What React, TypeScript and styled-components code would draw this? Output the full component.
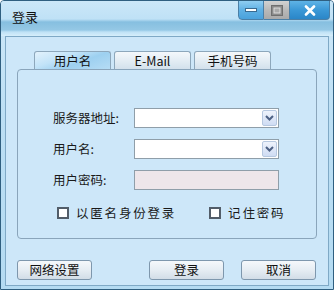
import React from "react";
import styled, { createGlobalStyle } from "styled-components";

const GlobalStyle = createGlobalStyle`
  html, body {
    margin: 0;
    padding: 0;
    background: #ffffff;
  }
  body {
    font-family: "Noto Sans CJK SC", "Microsoft YaHei", sans-serif;
    font-size: 12px;
    color: #1a1a1a;
  }
`;

const Window = styled.div`
  width: 334px;
  height: 290px;
  box-sizing: border-box;
  border: 1px solid #2f5f80;
  border-radius: 4px 4px 0 0;
  background: linear-gradient(#cfe9f9, #bcdff4 40%, #b4dbf2);
  display: flex;
  flex-direction: column;
  overflow: hidden;
`;

const TitleBar = styled.div`
  height: 35px;
  flex: none;
  display: flex;
  align-items: flex-start;
  background: linear-gradient(
    #cbe7f8 0px,
    #bfe1f6 18px,
    #86bfe0 21px,
    #95c8e5 29px,
    #c0e2f6 31px,
    #d6eefb 35px
  );
`;

const Title = styled.div`
  flex: 1;
  padding: 8px 0 0 11px;
  font-size: 13px;
  line-height: 16px;
  color: #111;
`;

const Caption = styled.div`
  display: flex;
  margin-right: 3px;
  margin-top: -1px;
`;

const CapButton = styled.div<{ $kind: "min" | "max" | "close" }>`
  width: ${(p) => (p.$kind === "close" ? 40 : 26)}px;
  height: 20px;
  box-sizing: border-box;
  border: 1px solid #4b7fa6;
  border-left: ${(p) => (p.$kind === "min" ? "1px solid #4b7fa6" : "none")};
  border-radius: ${(p) =>
    p.$kind === "min" ? "0 0 0 4px" : p.$kind === "close" ? "0 0 4px 0" : "0"};
  display: flex;
  align-items: center;
  justify-content: center;
  background: ${(p) =>
    p.$kind === "max"
      ? "linear-gradient(#d2d2d2, #b9b9b9 50%, #a9a9a9)"
      : p.$kind === "close"
      ? "linear-gradient(#5fb3e6, #3b98d6 50%, #2a86c8)"
      : "linear-gradient(#8fcdf2, #5fb0e4 50%, #4aa2dc)"};
`;

const Client = styled.div`
  flex: 1;
  margin: 0 4px 4px 4px;
  border: 1px solid #7fa9c6;
  background: #cde7f9;
  padding: 14px 12px 5px 11px;
  display: flex;
  flex-direction: column;
`;

const Tabs = styled.div`
  display: flex;
  gap: 3px;
  margin-left: 17px;
  height: 18px;
  align-items: flex-end;
`;

const Tab = styled.div<{ $active?: boolean }>`
  width: 77px;
  height: 18px;
  box-sizing: border-box;
  border: 1px solid #8da7bb;
  border-bottom: none;
  border-radius: 3px 3px 0 0;
  text-align: center;
  line-height: 17px;
  font-size: 12.5px;
  color: #111;
  background: ${(p) =>
    p.$active
      ? "linear-gradient(160deg, #e3f2fc 0%, #c2e3f8 35%, #9dd0f0 60%, #b5dcf5 100%)"
      : "linear-gradient(#f4f8fb, #e4edf4 50%, #d3e1ec)"};
`;

const Panel = styled.div`
  width: 300px;
  height: 170px;
  box-sizing: border-box;
  border: 1px solid #8aa5bb;
  border-radius: 4px;
  padding: 38px 0 0 35px;
  display: flex;
  flex-direction: column;
`;

const FieldRow = styled.div`
  display: flex;
  align-items: center;
  height: 19px;
  margin-bottom: 12px;
`;

const Label = styled.div`
  width: 81px;
  font-size: 12.5px;
  color: #1a1a1a;
`;

const Combo = styled.div<{ $disabled?: boolean }>`
  width: 145px;
  height: 20px;
  box-sizing: border-box;
  border: 1px solid #8f9ea9;
  background: ${(p) => (p.$disabled ? "#eee6ea" : "#ffffff")};
  display: flex;
  justify-content: flex-end;
  align-items: center;
  padding-right: 1px;
`;

const DropButton = styled.div`
  width: 15px;
  height: 16px;
  box-sizing: border-box;
  border: 1px solid #b6c8e0;
  border-radius: 2px;
  background: linear-gradient(#eef3fc, #cfdcf3);
  display: flex;
  align-items: center;
  justify-content: center;
`;

const Checks = styled.div`
  display: flex;
  align-items: center;
  margin: 2px 0 0 4px;
  gap: 33px;
`;

const Check = styled.label`
  display: flex;
  align-items: center;
  gap: 7px;
  letter-spacing: 1.8px;
  font-size: 12.5px;
  color: #1a1a1a;
`;

const Box = styled.span`
  width: 12px;
  height: 12px;
  box-sizing: border-box;
  border: 2px solid #525d69;
  background: #ffffff;
`;

const Footer = styled.div`
  display: flex;
  margin-top: 21px;
  gap: 17px;
`;

const Button = styled.div<{ $push?: boolean }>`
  width: 75px;
  height: 20px;
  box-sizing: border-box;
  border: 1px solid #7e97ad;
  border-radius: 3px;
  background: linear-gradient(#f5f8fb, #e6edf3 50%, #d2dde7);
  text-align: center;
  line-height: 18px;
  font-size: 12.5px;
  color: #111;
  margin-left: ${(p) => (p.$push ? "auto" : "0")};
`;

const Chevron = () => (
  <svg width="9" height="6" viewBox="0 0 9 6">
    <path d="M1 1 L4.5 4.5 L8 1" fill="none" stroke="#4d6185" strokeWidth="2" />
  </svg>
);

export default function App() {
  return (
    <>
      <GlobalStyle />
      <Window>
        <TitleBar>
          <Title>登录</Title>
          <Caption>
            <CapButton $kind="min">
              <svg width="12" height="4" viewBox="0 0 12 4">
                <rect x="0.5" y="0.5" width="11" height="3" fill="#fff" stroke="#3a6a90" strokeWidth="1" />
              </svg>
            </CapButton>
            <CapButton $kind="max">
              <svg width="12" height="11" viewBox="0 0 12 11">
                <rect x="0.5" y="0.5" width="11" height="10" fill="#8a8a8a" stroke="#6f6f6f" />
                <rect x="3" y="3" width="6" height="5" fill="#a9a9a9" stroke="#dcdcdc" />
              </svg>
            </CapButton>
            <CapButton $kind="close">
              <svg width="12" height="11" viewBox="0 0 12 11">
                <path d="M2 1.5 L10 9.5 M10 1.5 L2 9.5" stroke="#ffffff" strokeWidth="2.6" strokeLinecap="round" />
              </svg>
            </CapButton>
          </Caption>
        </TitleBar>
        <Client>
          <Tabs>
            <Tab $active>用户名</Tab>
            <Tab>E-Mail</Tab>
            <Tab>手机号码</Tab>
          </Tabs>
          <Panel>
            <FieldRow>
              <Label>服务器地址:</Label>
              <Combo>
                <DropButton>
                  <Chevron />
                </DropButton>
              </Combo>
            </FieldRow>
            <FieldRow>
              <Label>用户名:</Label>
              <Combo>
                <DropButton>
                  <Chevron />
                </DropButton>
              </Combo>
            </FieldRow>
            <FieldRow>
              <Label>用户密码:</Label>
              <Combo $disabled />
            </FieldRow>
            <Checks>
              <Check>
                <Box />
                以匿名身份登录
              </Check>
              <Check>
                <Box />
                记住密码
              </Check>
            </Checks>
          </Panel>
          <Footer>
            <Button>网络设置</Button>
            <Button $push>登录</Button>
            <Button>取消</Button>
          </Footer>
        </Client>
      </Window>
    </>
  );
}
